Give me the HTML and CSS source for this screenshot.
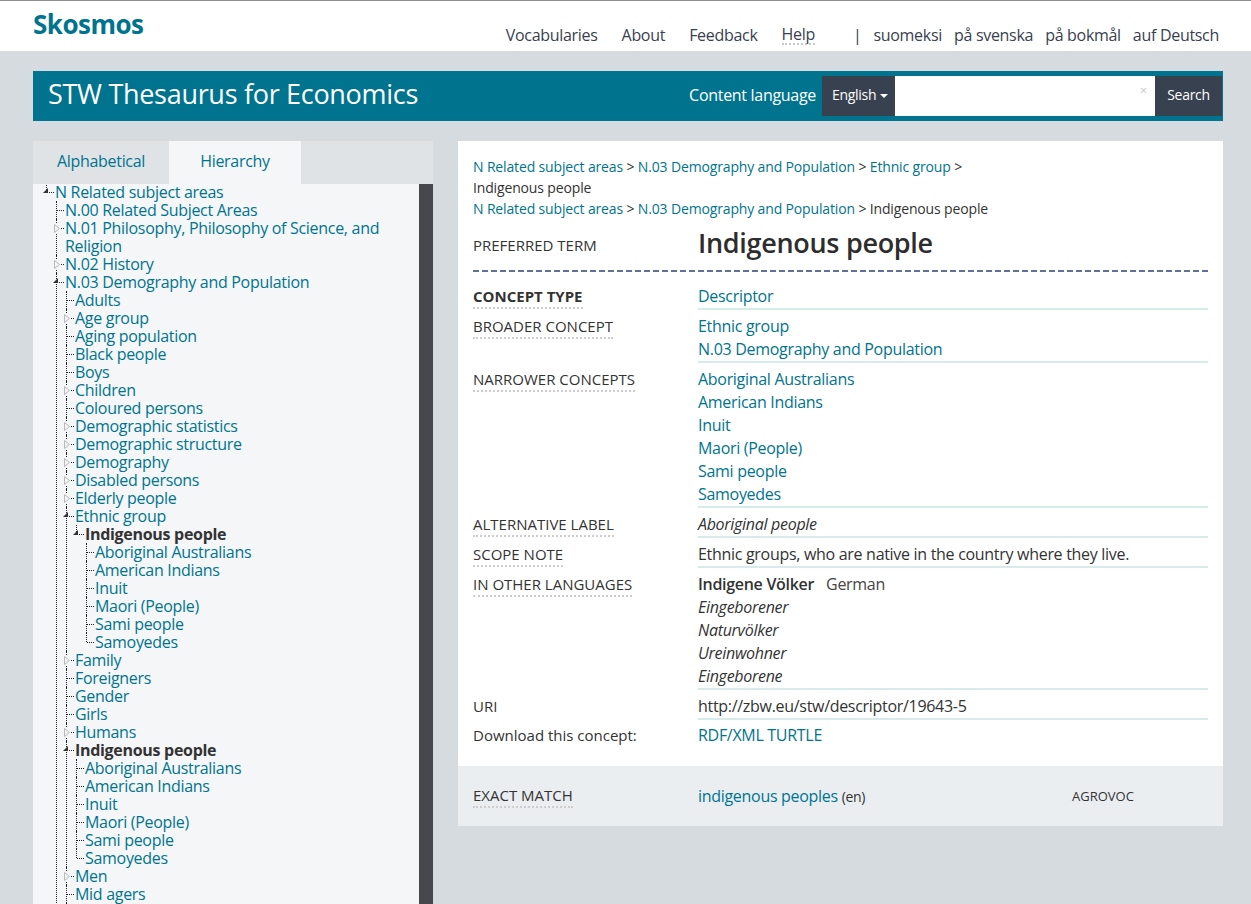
FILE: index.html
```html
<!DOCTYPE html>
<html lang="en">
<head>
<meta charset="utf-8">
<title>Indigenous people - STW Thesaurus for Economics - Skosmos</title>
<link rel="stylesheet" href="styles.css">
</head>
<body>
<header class="topbar">
  <div class="wrap topbar-inner">
    <a class="logo" href="#">Skosmos</a>
    <nav class="topnav">
      <a href="#" class="nav-item">Vocabularies</a>
      <a href="#" class="nav-item">About</a>
      <a href="#" class="nav-item">Feedback</a>
      <a href="#" class="nav-item help">Help</a>
      <span class="sep">|</span>
      <a href="#" class="lang">suomeksi</a>
      <a href="#" class="lang">på svenska</a>
      <a href="#" class="lang">på bokmål</a>
      <a href="#" class="lang">auf Deutsch</a>
    </nav>
  </div>
</header>

<div class="wrap page">
  <div class="vocbar">
    <h1 class="voctitle">STW Thesaurus for Economics</h1>
    <div class="searchbox">
      <span class="cl-label">Content language</span>
      <span class="select">English <span class="caret"></span></span>
      <span class="input"><span class="clear">×</span></span>
      <span class="btn">Search</span>
    </div>
  </div>

  <div class="columns">
    <aside class="sidebar">
      <div class="tabs">
        <span class="tab">Alphabetical</span>
        <span class="tab active">Hierarchy</span>
        <span class="tab-rest"></span>
      </div>
      <div class="tree-area">
        <div class="tree-scroll">
          <ul class="tree">
            <li class="last"><span class="tg o"></span><a href="#">N Related subject areas</a>
              <ul>
                <li><a href="#">N.00 Related Subject Areas</a></li>
                <li><span class="tg c"><svg width="6" height="9" viewBox="0 0 6 9"><path d="M0.5 0.5 L5.5 4.5 L0.5 8.5 Z" fill="none" stroke="#b8b8b8"/></svg></span><a href="#">N.01 Philosophy, Philosophy of Science, and Religion</a></li>
                <li><span class="tg c"><svg width="6" height="9" viewBox="0 0 6 9"><path d="M0.5 0.5 L5.5 4.5 L0.5 8.5 Z" fill="none" stroke="#b8b8b8"/></svg></span><a href="#">N.02 History</a></li>
                <li><span class="tg o"></span><a href="#">N.03 Demography and Population</a>
                  <ul>
                    <li><a href="#">Adults</a></li>
                    <li><span class="tg c"><svg width="6" height="9" viewBox="0 0 6 9"><path d="M0.5 0.5 L5.5 4.5 L0.5 8.5 Z" fill="none" stroke="#b8b8b8"/></svg></span><a href="#">Age group</a></li>
                    <li><a href="#">Aging population</a></li>
                    <li><a href="#">Black people</a></li>
                    <li><a href="#">Boys</a></li>
                    <li><span class="tg c"><svg width="6" height="9" viewBox="0 0 6 9"><path d="M0.5 0.5 L5.5 4.5 L0.5 8.5 Z" fill="none" stroke="#b8b8b8"/></svg></span><a href="#">Children</a></li>
                    <li><a href="#">Coloured persons</a></li>
                    <li><span class="tg c"><svg width="6" height="9" viewBox="0 0 6 9"><path d="M0.5 0.5 L5.5 4.5 L0.5 8.5 Z" fill="none" stroke="#b8b8b8"/></svg></span><a href="#">Demographic statistics</a></li>
                    <li><span class="tg c"><svg width="6" height="9" viewBox="0 0 6 9"><path d="M0.5 0.5 L5.5 4.5 L0.5 8.5 Z" fill="none" stroke="#b8b8b8"/></svg></span><a href="#">Demographic structure</a></li>
                    <li><span class="tg c"><svg width="6" height="9" viewBox="0 0 6 9"><path d="M0.5 0.5 L5.5 4.5 L0.5 8.5 Z" fill="none" stroke="#b8b8b8"/></svg></span><a href="#">Demography</a></li>
                    <li><span class="tg c"><svg width="6" height="9" viewBox="0 0 6 9"><path d="M0.5 0.5 L5.5 4.5 L0.5 8.5 Z" fill="none" stroke="#b8b8b8"/></svg></span><a href="#">Disabled persons</a></li>
                    <li><span class="tg c"><svg width="6" height="9" viewBox="0 0 6 9"><path d="M0.5 0.5 L5.5 4.5 L0.5 8.5 Z" fill="none" stroke="#b8b8b8"/></svg></span><a href="#">Elderly people</a></li>
                    <li><span class="tg o"></span><a href="#">Ethnic group</a>
                      <ul>
                        <li class="last"><span class="tg o"></span><a href="#" class="cur">Indigenous people</a>
                          <ul>
                            <li><a href="#">Aboriginal Australians</a></li>
                            <li><a href="#">American Indians</a></li>
                            <li><a href="#">Inuit</a></li>
                            <li><a href="#">Maori (People)</a></li>
                            <li><a href="#">Sami people</a></li>
                            <li class="last"><a href="#">Samoyedes</a></li>
                          </ul>
                        </li>
                      </ul>
                    </li>
                    <li><span class="tg c"><svg width="6" height="9" viewBox="0 0 6 9"><path d="M0.5 0.5 L5.5 4.5 L0.5 8.5 Z" fill="none" stroke="#b8b8b8"/></svg></span><a href="#">Family</a></li>
                    <li><a href="#">Foreigners</a></li>
                    <li><a href="#">Gender</a></li>
                    <li><a href="#">Girls</a></li>
                    <li><span class="tg c"><svg width="6" height="9" viewBox="0 0 6 9"><path d="M0.5 0.5 L5.5 4.5 L0.5 8.5 Z" fill="none" stroke="#b8b8b8"/></svg></span><a href="#">Humans</a></li>
                    <li><span class="tg o"></span><a href="#" class="cur">Indigenous people</a>
                      <ul>
                        <li><a href="#">Aboriginal Australians</a></li>
                        <li><a href="#">American Indians</a></li>
                        <li><a href="#">Inuit</a></li>
                        <li><a href="#">Maori (People)</a></li>
                        <li><a href="#">Sami people</a></li>
                        <li class="last"><a href="#">Samoyedes</a></li>
                      </ul>
                    </li>
                    <li><span class="tg c"><svg width="6" height="9" viewBox="0 0 6 9"><path d="M0.5 0.5 L5.5 4.5 L0.5 8.5 Z" fill="none" stroke="#b8b8b8"/></svg></span><a href="#">Men</a></li>
                    <li><a href="#">Mid agers</a></li>
                    <li><a href="#">Migrants</a></li>
                    <li><a href="#">Minorities</a></li>
                  </ul>
                </li>
              </ul>
            </li>
          </ul>
        </div>
        <div class="scrollbar"></div>
      </div>
    </aside>

    <main class="content">
      <div class="concept">
        <div class="crumbs">
          <div class="crumb-line"><a href="#">N Related subject areas</a><span class="gt"> &gt; </span><a href="#">N.03 Demography and Population</a><span class="gt"> &gt; </span><a href="#">Ethnic group</a><span class="gt"> &gt;</span></div>
          <div class="crumb-line"><span class="here">Indigenous people</span></div>
          <div class="crumb-line"><a href="#">N Related subject areas</a><span class="gt"> &gt; </span><a href="#">N.03 Demography and Population</a><span class="gt"> &gt; </span><span class="here">Indigenous people</span></div>
        </div>

        <div class="pref">
          <span class="pref-label">PREFERRED TERM</span>
          <h2 class="pref-term">Indigenous people</h2>
        </div>

        <div class="prop">
          <div class="pl"><span class="plabel strong">CONCEPT TYPE</span></div>
          <div class="pv"><a href="#">Descriptor</a></div>
        </div>
        <div class="prop">
          <div class="pl"><span class="plabel">BROADER CONCEPT</span></div>
          <div class="pv"><a href="#">Ethnic group</a><a href="#">N.03 Demography and Population</a></div>
        </div>
        <div class="prop">
          <div class="pl"><span class="plabel">NARROWER CONCEPTS</span></div>
          <div class="pv"><a href="#">Aboriginal Australians</a><a href="#">American Indians</a><a href="#">Inuit</a><a href="#">Maori (People)</a><a href="#">Sami people</a><a href="#">Samoyedes</a></div>
        </div>
        <div class="prop">
          <div class="pl"><span class="plabel">ALTERNATIVE LABEL</span></div>
          <div class="pv"><span class="it">Aboriginal people</span></div>
        </div>
        <div class="prop">
          <div class="pl"><span class="plabel">SCOPE NOTE</span></div>
          <div class="pv"><span>Ethnic groups, who are native in the country where they live.</span></div>
        </div>
        <div class="prop">
          <div class="pl"><span class="plabel">IN OTHER LANGUAGES</span></div>
          <div class="pv">
            <span class="ol"><b class="olterm">Indigene Völker</b><span class="olang">German</span></span>
            <span class="it">Eingeborener</span>
            <span class="it">Naturvölker</span>
            <span class="it">Ureinwohner</span>
            <span class="it">Eingeborene</span>
          </div>
        </div>
        <div class="prop">
          <div class="pl"><span class="plain">URI</span></div>
          <div class="pv"><span>http://zbw.eu/stw/descriptor/19643-5</span></div>
        </div>
        <div class="prop last">
          <div class="pl"><span class="plain">Download this concept:</span></div>
          <div class="pv"><span><a href="#">RDF/XML</a> <a href="#">TURTLE</a></span></div>
        </div>
      </div>
      <div class="mappings">
        <div class="pl"><span class="plabel">EXACT MATCH</span></div>
        <div class="mv"><a href="#">indigenous peoples</a> <span class="lang-tag">(en)</span></div>
        <div class="msrc">AGROVOC</div>
      </div>
    </main>
  </div>
</div>
</body>
</html>
```

FILE: styles.css
```css
html, body {
  margin: 0;
  padding: 0;
  height: 100%;
  overflow: hidden;
}
body {
  background: #d6dbdf;
  font-family: "Open Sans", "Noto Sans", sans-serif;
  font-size: 16px;
  letter-spacing: -0.3px;
  color: #333;
}
a {
  color: #00748f;
  text-decoration: none;
}
.wrap {
  width: 1190px;
  margin-left: 33px;
}

/* top bar */
.topbar {
  background: #fff;
  border-top: 1px solid #8e8e8e;
  height: 50px;
}
.topbar-inner {
  display: flex;
  justify-content: space-between;
  align-items: flex-start;
  height: 50px;
}
.logo {
  font-size: 26px;
  font-weight: 700;
  line-height: 30px;
  padding-top: 8px;
  color: #00748f;
  letter-spacing: -0.5px;
}
.topnav {
  display: flex;
  align-items: center;
  padding-top: 24px;
  padding-right: 4px;
  line-height: 20px;
  font-size: 16px;
}
.topnav a, .topnav .sep {
  color: #39414f;
}
.nav-item {
  margin-left: 24px;
}
.help {
  border-bottom: 2px dotted #c9c9c9;
  line-height: 18px;
}
.sep {
  margin-left: 38px;
  margin-right: 12px;
}
.lang {
  margin-left: 12px;
}
.sep + .lang {
  margin-left: 0;
}

/* vocab bar */
.page {
  padding-top: 20px;
}
.vocbar {
  background: #00748f;
  height: 50px;
  display: flex;
  align-items: center;
  justify-content: space-between;
  padding: 0 1px 0 15px;
  box-sizing: border-box;
}
.voctitle {
  margin: 0;
  font-size: 27px;
  font-weight: 400;
  color: #fff;
  line-height: 36px;
  padding-bottom: 4px;
}
.searchbox {
  display: flex;
  align-items: center;
  height: 40px;
}
.cl-label {
  color: #fff;
  font-size: 16px;
  margin-right: 6px;
  padding-bottom: 2px;
}
.select {
  background: #384150;
  color: #fff;
  height: 40px;
  width: 73px;
  box-sizing: border-box;
  padding-left: 10px;
  padding-bottom: 3px;
  font-size: 14px;
  display: flex;
  align-items: center;
}
.caret {
  display: inline-block;
  width: 0;
  height: 0;
  border-left: 4px solid transparent;
  border-right: 4px solid transparent;
  border-top: 4px solid #fff;
  margin-left: 4px;
  margin-top: 2px;
}
.input {
  background: #fff;
  width: 260px;
  height: 40px;
  position: relative;
}
.clear {
  position: absolute;
  right: 8px;
  top: 5px;
  font-size: 13px;
  color: #c8c8c8;
}
.btn {
  background: #384150;
  color: #fff;
  width: 67px;
  height: 40px;
  box-sizing: border-box;
  padding-bottom: 3px;
  display: flex;
  align-items: center;
  justify-content: center;
  font-size: 14px;
}

/* columns */
.columns {
  display: flex;
  align-items: flex-start;
  margin-top: 20px;
}
.sidebar {
  width: 400px;
  flex: none;
}
.tabs {
  display: flex;
  height: 43px;
  background: #dfe3e6;
}
.tab {
  display: flex;
  align-items: center;
  justify-content: center;
  width: 136px;
  box-sizing: border-box;
  padding-bottom: 4px;
  color: #00748f;
  font-size: 16px;
}
.tab.active {
  width: 132px;
  background: #f4f6f8;
}
.tab-rest {
  flex: 1;
}
.tree-area {
  display: flex;
  height: 740px;
  background: #f4f6f8;
}
.tree-scroll {
  flex: 1;
  overflow: hidden;
}
.scrollbar {
  width: 14px;
  background: #45484c;
}

/* tree */
.tree, .tree ul {
  list-style: none;
  margin: 0;
  padding: 0;
}
.tree {
  padding-left: 13px;
  margin-top: -1px;
}
.tree ul {
  padding-left: 1px;
}
.tree li {
  position: relative;
  padding-left: 9px;
  line-height: 18px;
  font-size: 16px;
}
.tree li::before {
  content: "";
  position: absolute;
  left: 0;
  top: 0;
  bottom: 0;
  border-left: 1px dotted #222;
}
.tree li.last::before {
  bottom: auto;
  height: 9px;
}
.tree li::after {
  content: "";
  position: absolute;
  left: 1px;
  top: 9px;
  width: 7px;
  border-top: 1px dotted #222;
}
.tg {
  position: absolute;
  z-index: 1;
}
.tg.o {
  left: -3px;
  top: 5px;
  width: 0;
  height: 0;
  border-left: 5px solid transparent;
  border-bottom: 5px solid #333;
}
.tg.c {
  left: -2px;
  top: 5px;
  line-height: 0;
  background: #f4f6f8;
}
.tg.c svg {
  display: block;
}
.tree a.cur {
  color: #333;
  font-weight: 700;
}

/* content */
.content {
  width: 765px;
  margin-left: 25px;
  flex: none;
  background: #fff;
}
.concept {
  padding: 15px 15px 19px;
}
.crumbs {
  font-size: 14px;
  line-height: 21px;
  letter-spacing: -0.15px;
}
.gt, .here {
  color: #333;
}
.pref {
  display: grid;
  grid-template-columns: 225px 1fr;
  align-items: center;
  margin-top: 6px;
  padding-bottom: 11px;
  background-image: repeating-linear-gradient(to right, #5f7099 0 6px, transparent 6px 9px);
  background-size: 100% 2px;
  background-repeat: no-repeat;
  background-position: bottom left;
}
.pref-label {
  font-size: 15px;
  letter-spacing: 0;
  color: #333;
  padding-top: 4px;
}
.pref-term {
  margin: 0;
  font-size: 27px;
  font-weight: 600;
  line-height: 36px;
  color: #2d2d2d;
}
.prop {
  display: grid;
  grid-template-columns: 225px 1fr;
  margin-bottom: 5px;
}
.pref + .prop {
  margin-top: 13px;
}
.pl {
  line-height: 23px;
}
.plabel {
  display: inline-block;
  font-size: 15px;
  letter-spacing: 0;
  color: #333;
  border-bottom: 2px dotted #cdcdcd;
  line-height: 22px;
}
.plabel.strong {
  font-weight: 700;
}
.plain {
  font-size: 15px;
  letter-spacing: 0;
  color: #333;
}
.pv {
  display: flex;
  flex-direction: column;
  align-items: flex-start;
  line-height: 23px;
  border-bottom: 2px solid #d6ebea;
  color: #333;
}
.prop.last {
  margin-bottom: 0;
  margin-top: -1px;
}
.prop.last .pv {
  border-bottom: 0;
}
.it {
  font-style: italic;
}
.olterm {
  font-weight: 600;
  margin-right: 12px;
}
.olang {
  color: #444;
}

.mappings {
  background: #eaeef1;
  height: 60px;
  display: grid;
  grid-template-columns: 225px 374px 1fr;
  align-items: center;
  padding: 0 15px;
}
.lang-tag {
  font-size: 14px;
  color: #333;
}
.msrc {
  font-size: 13px;
  letter-spacing: 0;
  color: #333;
}
```
